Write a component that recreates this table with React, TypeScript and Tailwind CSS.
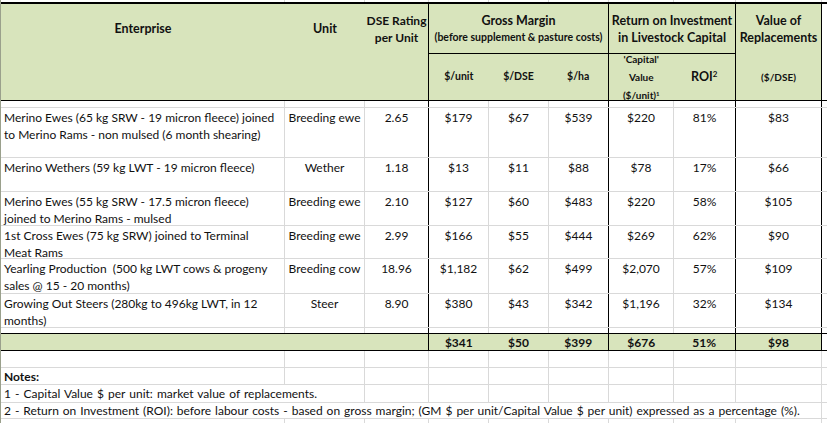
const grid = "border-[#d9d9d9]";

// widths of the nine spreadsheet columns (right border included)
const colW = [
  "w-[284px]",
  "w-[80px]",
  "w-[64px]",
  "w-[60px]",
  "w-[60px]",
  "w-[60px]",
  "w-[65px]",
  "w-[62px]",
  "w-[86px]",
];

// right border of each column inside the table body
const bodyEdge = [
  "border-r border-r-[#d9d9d9]",
  "border-r border-r-[#d9d9d9]",
  "border-r border-r-black",
  "border-r border-r-[#d9d9d9]",
  "border-r border-r-[#d9d9d9]",
  "border-r border-r-black",
  "border-r border-r-[#d9d9d9]",
  "border-r border-r-black",
  "border-r border-r-black",
];

const rows = [
  {
    h: "h-[50px]",
    lines: [
      "Merino Ewes (65 kg SRW - 19 micron fleece) joined",
      "to Merino Rams - non mulsed (6 month shearing)",
    ],
    unit: "Breeding ewe",
    vals: ["2.65", "$179", "$67", "$539", "$220", "81%", "$83"],
  },
  {
    h: "h-[34px]",
    lines: ["Merino Wethers (59 kg LWT - 19 micron fleece)"],
    unit: "Wether",
    vals: ["1.18", "$13", "$11", "$88", "$78", "17%", "$66"],
  },
  {
    h: "h-[34px]",
    lines: [
      "Merino Ewes (55 kg SRW - 17.5 micron fleece)",
      "joined to Merino Rams - mulsed",
    ],
    unit: "Breeding ewe",
    vals: ["2.10", "$127", "$60", "$483", "$220", "58%", "$105"],
  },
  {
    h: "h-[33px]",
    lines: ["1st Cross Ewes (75 kg SRW) joined to Terminal", "Meat Rams"],
    unit: "Breeding ewe",
    vals: ["2.99", "$166", "$55", "$444", "$269", "62%", "$90"],
  },
  {
    h: "h-[35px]",
    lines: [
      "Yearling Production  (500 kg LWT cows & progeny",
      "sales @ 15 - 20 months)",
    ],
    unit: "Breeding cow",
    vals: ["18.96", "$1,182", "$62", "$499", "$2,070", "57%", "$109"],
  },
  {
    h: "h-[34px]",
    lines: ["Growing Out Steers (280kg to 496kg LWT, in 12", "months)"],
    unit: "Steer",
    vals: ["8.90", "$380", "$43", "$342", "$1,196", "32%", "$134"],
  },
];

const totals = ["$341", "$50", "$399", "$676", "51%", "$98"];

function Tail({ h }: { h: string }) {
  return <div className={`flex-1 ${h} bg-white`} />;
}

function EmptyRow({ h, edge = "border-b border-b-[#d9d9d9]" }: { h: string; edge?: string }) {
  return (
    <div className={`flex ${h} ${edge}`}>
      {colW.map((w, i) => (
        <div key={i} className={`${w} shrink-0 ${bodyEdge[i]}`} />
      ))}
      <Tail h="h-full" />
    </div>
  );
}

function GridRow({ h, from = 0 }: { h: string; from?: number }) {
  // plain white spreadsheet row below the table (all grey lines)
  return (
    <>
      {colW.slice(from).map((w, i) => (
        <div key={i} className={`${w} shrink-0 ${h} border-r ${grid}`} />
      ))}
    </>
  );
}

export default function App() {
  return (
    <div
      className="w-[827px] h-[423px] overflow-hidden bg-white text-[#111] border-l border-l-[#9aa08c]"
      style={{ fontFamily: "Lato, 'Liberation Sans', sans-serif" }}
    >
      {/* strip above the table */}
      <div className="flex h-[2px]">
        <GridRow h="h-[2px]" />
      </div>

      {/* header */}
      <div className="flex h-[99px] border-t-2 border-b border-black font-bold">
        <div className="w-[428px] shrink-0 h-[96px] bg-[#d8e4bc] border-r border-black flex">
          <div className="w-[284px] h-[50px] flex items-center justify-center text-[12.5px]">
            Enterprise
          </div>
          <div className="w-[80px] h-[50px] flex items-center justify-center text-[12.5px]">
            Unit
          </div>
          <div className="w-[63px] h-[50px] flex flex-col items-center justify-center text-[12px] leading-[17px] whitespace-nowrap">
            <span>DSE Rating</span>
            <span>per Unit</span>
          </div>
        </div>

        <div className="w-[180px] shrink-0 h-[96px] bg-[#d8e4bc] border-r border-black flex flex-col">
          <div className="h-[50px] shrink-0 border-b border-black flex flex-col items-center justify-center leading-[17px] whitespace-nowrap">
            <span className="text-[12.5px]">Gross Margin</span>
            <span className="text-[10.5px]">(before supplement &amp; pasture costs)</span>
          </div>
          <div className="flex h-[46px] items-center text-[10.5px]">
            <span className="w-[60px] text-center">$/unit</span>
            <span className="w-[60px] text-center">$/DSE</span>
            <span className="w-[60px] text-center">$/ha</span>
          </div>
        </div>

        <div className="w-[127px] shrink-0 h-[96px] bg-[#d8e4bc] border-r border-black flex flex-col">
          <div className="h-[50px] shrink-0 border-b border-black flex flex-col items-center justify-center text-[12.5px] leading-[17px] whitespace-nowrap">
            <span>Return on Investment</span>
            <span>in Livestock Capital</span>
          </div>
          <div className="flex h-[46px] items-center">
            <div className="w-[65px] h-[46px] flex flex-col items-center justify-center text-[10px] leading-[18px]">
              <span>'Capital'</span>
              <span>Value</span>
              <span>
                ($/unit)<sup className="text-[6px] leading-none">1</sup>
              </span>
            </div>
            <div className="w-[62px] text-center text-[12.5px]">
              ROI<sup className="text-[8px] leading-none">2</sup>
            </div>
          </div>
        </div>

        <div className="w-[86px] shrink-0 h-[96px] bg-[#d8e4bc] border-r border-black flex flex-col">
          <div className="h-[50px] shrink-0 flex flex-col items-center justify-center text-[12.5px] leading-[17px] whitespace-nowrap">
            <span>Value of</span>
            <span>Replacements</span>
          </div>
          <div className="flex h-[46px] items-center justify-center text-[10px]">($/DSE)</div>
        </div>
        <div className="flex-1 bg-white" />
      </div>

      {/* table body */}
      <div className="text-[12px] leading-[17px]">
        <EmptyRow h="h-[7px]" />
        {rows.map((r, ri) => (
          <div key={ri} className={`flex ${r.h} border-b ${grid}`}>
            <div className={`${colW[0]} shrink-0 ${bodyEdge[0]} pl-[3px] pt-[1px] whitespace-pre`}>
              {r.lines.map((l, li) => (
                <div key={li}>{l}</div>
              ))}
            </div>
            <div className={`${colW[1]} shrink-0 ${bodyEdge[1]} pt-[1px] text-center whitespace-nowrap`}>
              {r.unit}
            </div>
            {r.vals.map((v, vi) => (
              <div
                key={vi}
                className={`${colW[vi + 2]} shrink-0 ${bodyEdge[vi + 2]} pt-[1px] text-center`}
              >
                {v}
              </div>
            ))}
            <Tail h="h-full" />
          </div>
        ))}
        <EmptyRow h="h-[6px]" edge="border-b border-b-black" />

        {/* totals */}
        <div className="flex h-[17px] border-b border-black font-bold">
          <div className="w-[428px] shrink-0 bg-[#d8e4bc] border-r border-black" />
          <div className="w-[180px] shrink-0 bg-[#d8e4bc] border-r border-black flex items-center">
            <span className="w-[60px] text-center">{totals[0]}</span>
            <span className="w-[60px] text-center">{totals[1]}</span>
            <span className="w-[60px] text-center">{totals[2]}</span>
          </div>
          <div className="w-[127px] shrink-0 bg-[#d8e4bc] border-r border-black flex items-center">
            <span className="w-[65px] text-center">{totals[3]}</span>
            <span className="w-[62px] text-center">{totals[4]}</span>
          </div>
          <div className="w-[86px] shrink-0 bg-[#d8e4bc] border-r border-black flex items-center justify-center">
            {totals[5]}
          </div>
          <Tail h="h-full" />
        </div>

        {/* blank spreadsheet rows and notes */}
        <div className={`flex h-[17px] border-b ${grid}`}>
          <GridRow h="h-full" />
        </div>
        <div className={`flex h-[17px] border-b ${grid}`}>
          <div className={`w-[284px] shrink-0 border-r ${grid} pl-[3px] font-bold`}>Notes:</div>
          <GridRow h="h-full" from={1} />
        </div>
        <div className={`flex h-[18px] border-b ${grid} [word-spacing:1px]`}>
          <div className={`w-[364px] shrink-0 border-r ${grid} pl-[3px] whitespace-nowrap`}>
            1 - Capital Value $ per unit: market value of replacements.
          </div>
          <GridRow h="h-full" from={2} />
        </div>
        <div className={`flex h-[16px] border-b ${grid} [word-spacing:0.9px]`}>
          <div className={`w-[821px] shrink-0 border-r ${grid} pl-[3px] whitespace-nowrap leading-[16px]`}>
            2 - Return on Investment (ROI): before labour costs - based on gross margin; (GM $ per
            unit/Capital Value $ per unit) expressed as a percentage (%).
          </div>
        </div>
        <div className="flex h-[6px]">
          <GridRow h="h-full" />
        </div>
      </div>
    </div>
  );
}
